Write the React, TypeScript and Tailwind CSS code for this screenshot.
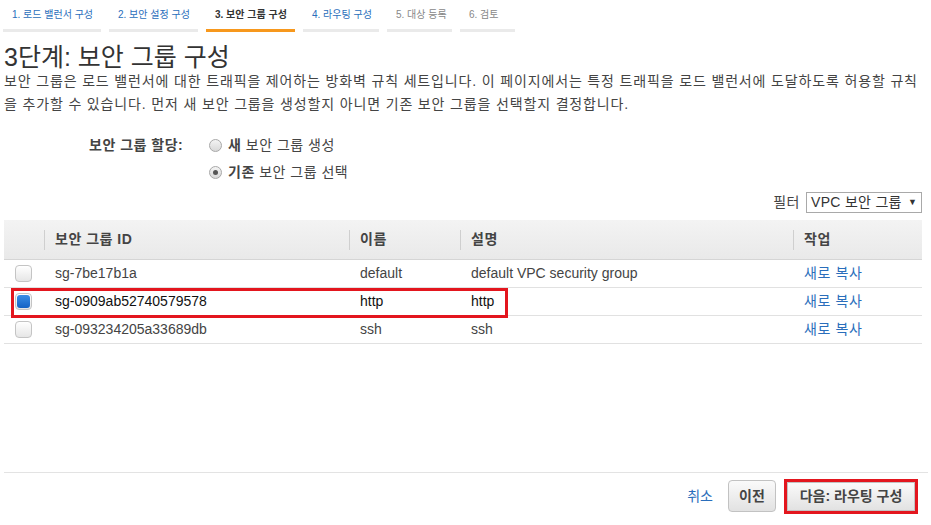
import React from "react";

const FONT = { fontFamily: '"Liberation Sans", Arial, "Noto Sans CJK KR", sans-serif' };

const tabs = [
  { t: "1. 로드 밸런서 구성", w: "w-[98px]", cls: "text-[#2a6ebb] border-[#eaeaea]" },
  { t: "2. 보안 설정 구성", w: "w-[89px]", cls: "text-[#2a6ebb] border-[#eaeaea]" },
  { t: "3. 보안 그룹 구성", w: "w-[89px]", cls: "text-[#333] font-bold border-[#f7981d]" },
  { t: "4. 라우팅 구성", w: "w-[76px]", cls: "text-[#2a6ebb] border-[#eaeaea]" },
  { t: "5. 대상 등록", w: "w-[65px]", cls: "text-[#888] border-[#eaeaea]" },
  { t: "6. 검토", w: "w-[55px]", cls: "text-[#888] border-[#eaeaea]" },
];

function Radio({ checked }: { checked?: boolean }) {
  return (
    <span className="w-[13px] h-[13px] rounded-full border border-[#a8a8a8] bg-gradient-to-b from-[#f4f4f4] to-[#d8d8d8] flex items-center justify-center shrink-0">
      {checked && <span className="w-[5px] h-[5px] rounded-full bg-[#555]" />}
    </span>
  );
}

function Check({ checked }: { checked?: boolean }) {
  return (
    <span className="w-[17px] h-[17px] rounded-[4px] border border-[#c4c4c4] bg-gradient-to-b from-[#ffffff] to-[#e6e6e6] flex items-center justify-center">
      {checked && <span className="w-[13px] h-[13px] rounded-[3px] bg-gradient-to-b from-[#3a8ee6] to-[#1462c4]" />}
    </span>
  );
}

const rows = [
  { id: "sg-7be17b1a", name: "default", desc: "default VPC security group", sel: false },
  { id: "sg-0909ab52740579578", name: "http", desc: "http", sel: true },
  { id: "sg-093234205a33689db", name: "ssh", desc: "ssh", sel: false },
];

export default function App() {
  return (
    <div style={FONT} className="w-[931px] h-[525px] bg-white text-[#444] text-[14px] flex flex-col overflow-hidden">
      {/* step tabs */}
      <div className="flex gap-[8px] pl-[3px]">
        {tabs.map((t) => (
          <div key={t.t} className={`${t.w} h-[32px] border-b-[3px] pl-[9px] flex items-center text-[10px] whitespace-nowrap ${t.cls}`}>
            {t.t}
          </div>
        ))}
      </div>

      <div className="pl-[4px]">
        <h1 className="mt-[12px] text-[25px] leading-[26px] text-[#333]">3단계: 보안 그룹 구성</h1>
        <p className="leading-[23px] text-[#444] whitespace-nowrap tracking-[0.85px]">
          보안 그룹은 로드 밸런서에 대한 트래픽을 제어하는 방화벽 규칙 세트입니다. 이 페이지에서는 특정 트래픽을 로드 밸런서에 도달하도록 허용할 규칙
          <br />
          을 추가할 수 있습니다. 먼저 새 보안 그룹을 생성할지 아니면 기존 보안 그룹을 선택할지 결정합니다.
        </p>

        {/* assign */}
        <div className="mt-[16px] flex pl-[85px]">
          <div className="w-[120px] font-bold text-[#444] leading-[27px] tracking-[0.5px]">보안 그룹 할당:</div>
          <div className="flex flex-col tracking-[0.5px]">
            <label className="flex items-center gap-[6px] h-[27px]">
              <Radio />
              <span><b>새</b> 보안 그룹 생성</span>
            </label>
            <label className="flex items-center gap-[6px] h-[27px]">
              <Radio checked />
              <span><b>기존</b> 보안 그룹 선택</span>
            </label>
          </div>
        </div>

        {/* filter */}
        <div className="w-[918px] flex justify-end items-center gap-[6px] mt-[6px]">
          <span className="text-[#444] tracking-[0.5px]">필터</span>
          <div className="w-[116px] h-[21px] border border-[#a9a9a9] flex items-center justify-between pl-[4px] pr-[4px] text-[#333]">
            <span className="tracking-[0.3px]">VPC 보안 그룹</span>
            <span className="text-[9px] text-[#333]">▼</span>
          </div>
        </div>

        {/* table */}
        <div className="relative w-[918px] mt-[7px]">
          <div className="grid grid-cols-[40px_305px_111px_333px_129px] h-[40px] bg-gradient-to-b from-[#f3f3f3] to-[#e9e9e9] border-b border-[#d5d5d5] font-bold text-[#444]">
            <div />
            {["보안 그룹 ID", "이름", "설명", "작업"].map((h) => (
              <div key={h} className="flex items-center">
                <span className="w-px h-[20px] bg-[#cfcfcf]" />
                <span className="pl-[10px] tracking-[0.5px]">{h}</span>
              </div>
            ))}
          </div>
          {rows.map((r) => (
            <div key={r.id} className={`grid grid-cols-[40px_305px_111px_333px_129px] h-[28px] border-b border-[#e1e1e1] items-center ${r.sel ? "text-[#111]" : "text-[#444]"}`}>
              <div className="pl-[11px] flex items-center"><Check checked={r.sel} /></div>
              <div className="pl-[11px]">{r.id}</div>
              <div className="pl-[11px]">{r.name}</div>
              <div className="pl-[11px]">{r.desc}</div>
              <div className="pl-[11px] text-[#2a6ebb] tracking-[0.6px]">새로 복사</div>
            </div>
          ))}
          <div className="absolute left-[7px] top-[68px] w-[497px] h-[30px] border-[3px] border-[#e3161e] pointer-events-none" />
        </div>
      </div>

      <div className="flex-1" />

      {/* footer */}
      <div className="ml-[4px] w-[924px] border-t border-[#e3e3e3] h-[53px] flex items-center justify-end pr-[13px] pb-[6px]">
        <span className="text-[#2a6ebb] mr-[15px]">취소</span>
        <button className="w-[48px] h-[32px] rounded-[4px] border border-[#c2c2c2] bg-gradient-to-b from-[#fafafa] to-[#e2e2e2] font-bold text-[#444] mr-[11px]">이전</button>
        <button className="w-[128px] h-[29px] border border-[#c2c2c2] bg-gradient-to-b from-[#fafafa] to-[#e2e2e2] font-bold text-[#444] outline outline-[3px] outline-[#e3161e]">다음: 라우팅 구성</button>
      </div>
    </div>
  );
}
